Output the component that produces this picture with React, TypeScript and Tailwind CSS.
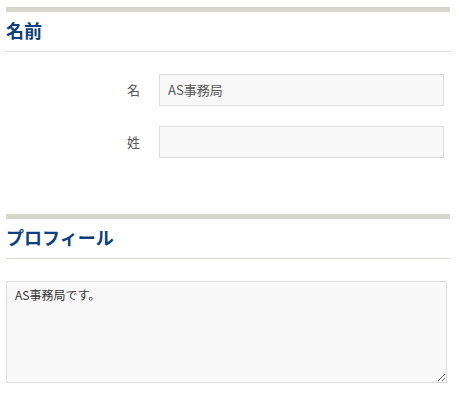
import React from "react";

const font = { fontFamily: '"Noto Sans CJK JP", "Noto Sans", sans-serif' };

export default function App() {
  return (
    <div className="w-[459px] h-[410px] bg-white pt-[7px] px-[6px]" style={font}>
      <section className="w-[444px]">
        <h2 className="border-t-[5px] border-t-[#d6d6cc] border-b border-b-[#dcdcdc] pt-[5px] pb-[7px] text-[18px] leading-[27px] font-bold text-[#0b3f7d]">
          名前
        </h2>
        <div className="pt-[22px] flex flex-col gap-[20px]">
          <div className="flex items-center">
            <label className="w-[134px] text-right text-[13px] text-[#555]">名</label>
            <input
              className="ml-[19px] w-[285px] h-[32px] bg-[#f8f8f8] border border-[#dcdcdc] px-[8px] pb-[2px] text-[13px] text-[#555] outline-none"
              style={font}
              defaultValue="AS事務局"
            />
          </div>
          <div className="flex items-center">
            <label className="w-[134px] text-right text-[13px] text-[#555]">姓</label>
            <input
              className="ml-[19px] w-[285px] h-[32px] bg-[#f8f8f8] border border-[#dcdcdc] px-[8px] pb-[2px] text-[13px] text-[#555] outline-none"
              style={font}
              defaultValue=""
            />
          </div>
        </div>
      </section>
      <section className="w-[444px] mt-[56px]">
        <h2 className="border-t-[5px] border-t-[#d6d6cc] border-b border-b-[#d9d9c8] pt-[5px] pb-[7px] text-[18px] leading-[27px] font-bold text-[#0b3f7d]">
          プロフィール
        </h2>
        <div className="pt-[22px]">
          <textarea
            className="block w-[441px] h-[102px] bg-[#f8f8f8] border border-[#dcdcdc] px-[8px] py-[4px] text-[12px] leading-[18px] text-[#333] outline-none"
            style={font}
            defaultValue="AS事務局です。"
          />
        </div>
      </section>
    </div>
  );
}
